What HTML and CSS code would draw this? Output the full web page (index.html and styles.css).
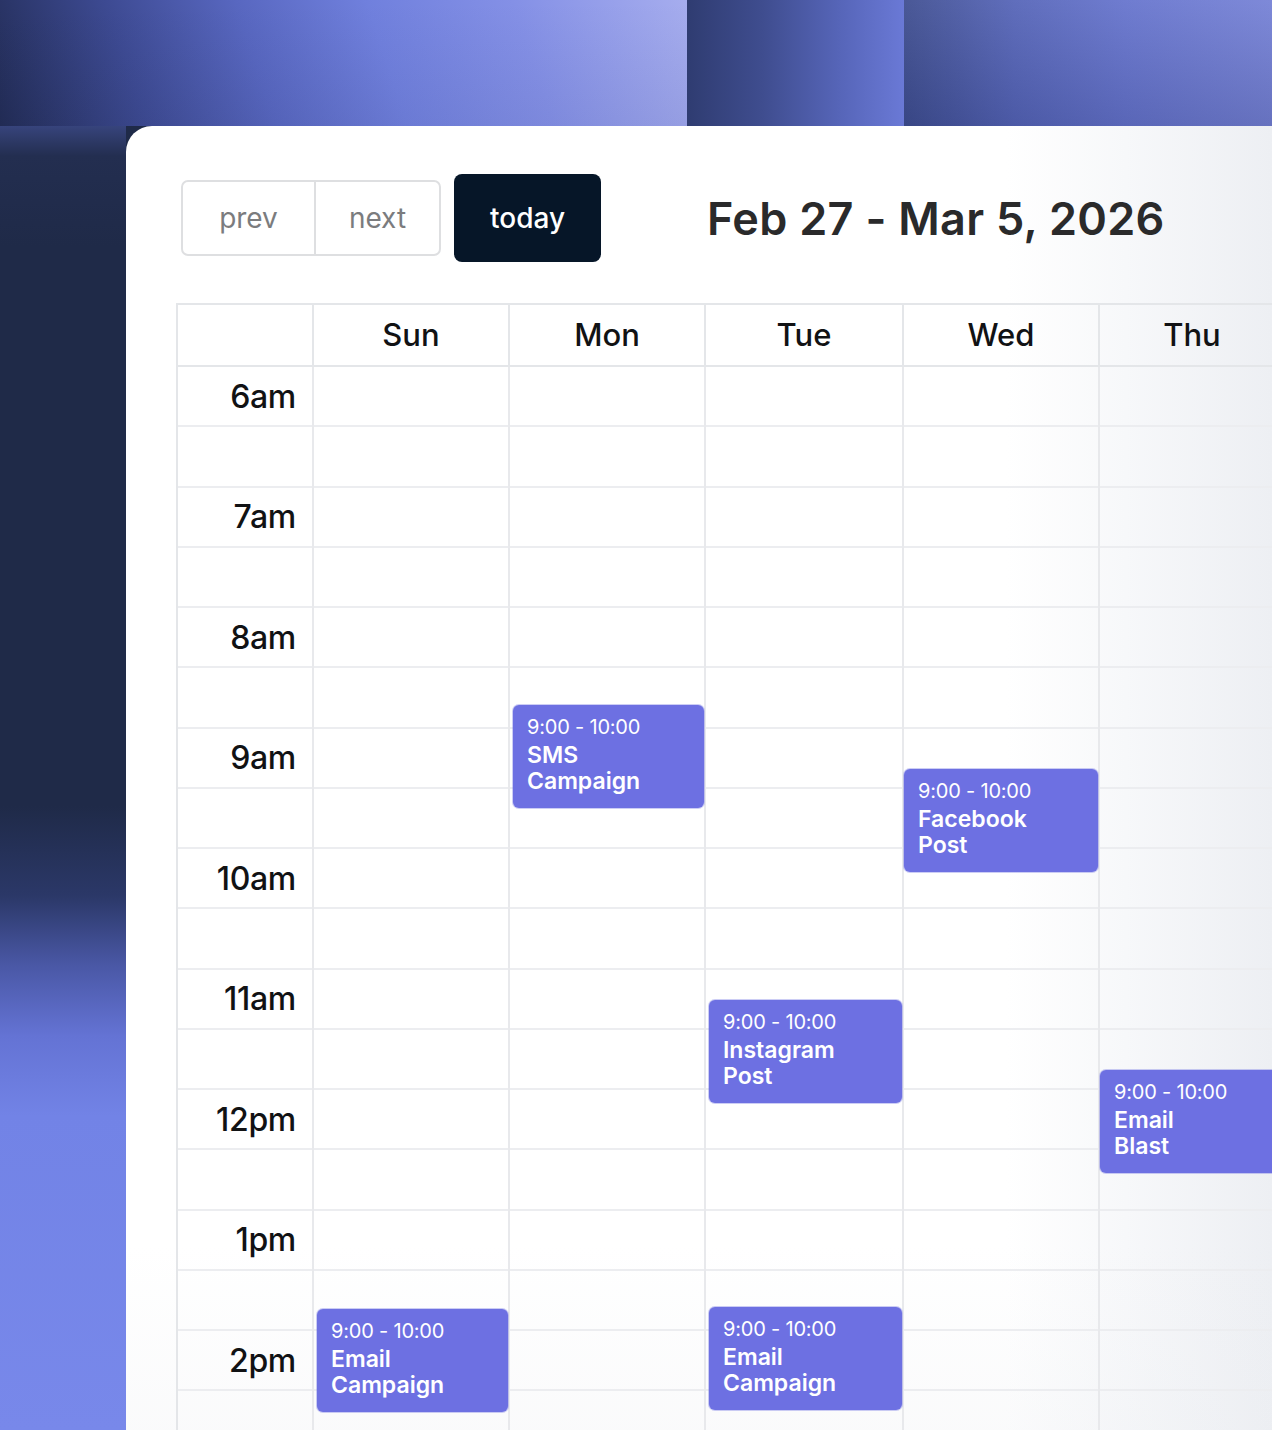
FILE: index.html
```html
<!DOCTYPE html>
<html lang="en">
<head>
<meta charset="utf-8">
<title>Calendar</title>
<link rel="stylesheet" href="styles.css">
</head>
<body>
<div class="page">
  <div class="top-band">
    <div class="band band-a"></div>
    <div class="band band-b"></div>
    <div class="band band-c"></div>
  </div>
  <div class="stage">
    <div class="strip"></div>
    <main class="card">
      <div class="toolbar">
        <div class="btn-group">
          <button class="btn btn-prev">prev</button>
          <button class="btn btn-next">next</button>
        </div>
        <button class="btn-today">today</button>
        <h1 class="title">Feb 27 - Mar 5, 2026</h1>
      </div>

      <div class="calendar">
        <div class="head">
          <div class="head-cell corner"></div>
          <div class="head-cell">Sun</div>
          <div class="head-cell">Mon</div>
          <div class="head-cell">Tue</div>
          <div class="head-cell">Wed</div>
          <div class="head-cell">Thu</div>
        </div>

        <div class="body">
          <div class="times">
            <div class="slot label">6am</div><div class="slot"></div>
            <div class="slot label">7am</div><div class="slot"></div>
            <div class="slot label">8am</div><div class="slot"></div>
            <div class="slot label">9am</div><div class="slot"></div>
            <div class="slot label">10am</div><div class="slot"></div>
            <div class="slot label">11am</div><div class="slot"></div>
            <div class="slot label">12pm</div><div class="slot"></div>
            <div class="slot label">1pm</div><div class="slot"></div>
            <div class="slot label">2pm</div><div class="slot"></div>
          </div>

          <div class="day">
            <div class="slot"></div><div class="slot"></div><div class="slot"></div><div class="slot"></div><div class="slot"></div><div class="slot"></div>
            <div class="slot"></div><div class="slot"></div><div class="slot"></div><div class="slot"></div><div class="slot"></div><div class="slot"></div>
            <div class="slot"></div><div class="slot"></div><div class="slot"></div><div class="slot"></div><div class="slot"></div><div class="slot"></div>
            <div class="event ev-left" style="top:942px"><div class="ev-time">9:00 - 10:00</div><div class="ev-title"><span>Email</span><span>Campaign</span></div></div>
          </div>

          <div class="day">
            <div class="slot"></div><div class="slot"></div><div class="slot"></div><div class="slot"></div><div class="slot"></div><div class="slot"></div>
            <div class="slot"></div><div class="slot"></div><div class="slot"></div><div class="slot"></div><div class="slot"></div><div class="slot"></div>
            <div class="slot"></div><div class="slot"></div><div class="slot"></div><div class="slot"></div><div class="slot"></div><div class="slot"></div>
            <div class="event ev-left" style="top:338px"><div class="ev-time">9:00 - 10:00</div><div class="ev-title"><span>SMS</span><span>Campaign</span></div></div>
          </div>

          <div class="day">
            <div class="slot"></div><div class="slot"></div><div class="slot"></div><div class="slot"></div><div class="slot"></div><div class="slot"></div>
            <div class="slot"></div><div class="slot"></div><div class="slot"></div><div class="slot"></div><div class="slot"></div><div class="slot"></div>
            <div class="slot"></div><div class="slot"></div><div class="slot"></div><div class="slot"></div><div class="slot"></div><div class="slot"></div>
            <div class="event ev-left" style="top:633px"><div class="ev-time">9:00 - 10:00</div><div class="ev-title"><span>Instagram</span><span>Post</span></div></div>
            <div class="event ev-left" style="top:940px"><div class="ev-time">9:00 - 10:00</div><div class="ev-title"><span>Email</span><span>Campaign</span></div></div>
          </div>

          <div class="day">
            <div class="slot"></div><div class="slot"></div><div class="slot"></div><div class="slot"></div><div class="slot"></div><div class="slot"></div>
            <div class="slot"></div><div class="slot"></div><div class="slot"></div><div class="slot"></div><div class="slot"></div><div class="slot"></div>
            <div class="slot"></div><div class="slot"></div><div class="slot"></div><div class="slot"></div><div class="slot"></div><div class="slot"></div>
            <div class="event" style="top:402px"><div class="ev-time">9:00 - 10:00</div><div class="ev-title"><span>Facebook</span><span>Post</span></div></div>
          </div>

          <div class="day">
            <div class="slot"></div><div class="slot"></div><div class="slot"></div><div class="slot"></div><div class="slot"></div><div class="slot"></div>
            <div class="slot"></div><div class="slot"></div><div class="slot"></div><div class="slot"></div><div class="slot"></div><div class="slot"></div>
            <div class="slot"></div><div class="slot"></div><div class="slot"></div><div class="slot"></div><div class="slot"></div><div class="slot"></div>
            <div class="event" style="top:703px"><div class="ev-time">9:00 - 10:00</div><div class="ev-title"><span>Email</span><span>Blast</span></div></div>
          </div>
        </div>
      </div>
    </main>
  </div>
</div>
</body>
</html>
```

FILE: styles.css
```css
* { box-sizing: border-box; }

html, body {
  margin: 0;
  padding: 0;
}

body {
  width: 1272px;
  height: 1430px;
  overflow: hidden;
  font-family: "Inter", "Open Sans", "Liberation Sans", sans-serif;
  background: #1f2a48;
}

.page {
  width: 1272px;
  height: 1430px;
  overflow: hidden;
  display: flex;
  flex-direction: column;
}

/* ---------- backdrop ---------- */
.top-band {
  display: flex;
  height: 126px;
  flex: none;
}

.band { height: 100%; }

.band-a {
  width: 687px;
  background:
    linear-gradient(to bottom, rgba(20, 28, 70, 0) 0%, rgba(20, 28, 70, 0.06) 100%),
    linear-gradient(72deg, #222c55 0%, #3d4a92 20%, #5867c0 38%, #7080dd 56%, #8490e6 76%, #a6adee 100%);
}

.band-b {
  width: 217px;
  background: linear-gradient(to right, #2f3c71 0%, #3f4d8f 35%, #5665b8 70%, #6a79d6 100%);
}

.band-c {
  flex: 1;
  background:
    linear-gradient(to bottom, rgba(255, 255, 255, 0.06) 0%, rgba(20, 28, 70, 0.16) 100%),
    linear-gradient(to right, #3f4e90 0%, #5665b8 30%, #6674cd 60%, #7682d6 100%);
}

.stage {
  flex: 1;
  display: flex;
  min-height: 0;
}

.strip {
  width: 126px;
  flex: none;
  background: linear-gradient(to bottom,
    #37447c 0px,
    #232e50 30px,
    #1f2a48 120px,
    #1f2a48 680px,
    #2b3868 770px,
    #4a58a6 840px,
    #6473d4 910px,
    #7283e6 990px,
    #7888ea 1304px);
}

/* ---------- card ---------- */
.card {
  flex: none;
  width: 1180px;
  height: 1400px;
  overflow: hidden;
  border-top-left-radius: 26px;
  background:
    linear-gradient(to bottom, rgba(236, 238, 242, 0) 80%, rgba(234, 236, 240, 0.35) 100%),
    linear-gradient(to right, #ffffff 0px, #ffffff 880px, #f7f8fa 1000px, #edeff3 1146px);
  padding: 48px 0 0 50px;
}

.toolbar {
  display: flex;
  align-items: center;
  margin-left: 5px;
  height: 88px;
}

.btn-group {
  display: flex;
  height: 76px;
  border: 2px solid #dedfe1;
  border-radius: 7px;
  overflow: hidden;
  background: #fff;
}

.btn {
  border: 0;
  background: transparent;
  font-family: inherit;
  font-size: 28px;
  font-weight: 400;
  color: #7b7c7e;
  padding: 0;
  height: 100%;
  cursor: pointer;
}

.btn-prev {
  width: 133px;
  border-right: 2px solid #dedfe1;
}

.btn-next {
  width: 123px;
}

.btn-today {
  margin-left: 13px;
  width: 147px;
  height: 88px;
  border: 0;
  border-radius: 8px;
  background: #061628;
  color: #ffffff;
  font-family: inherit;
  font-size: 28px;
  font-weight: 500;
  padding: 0;
}

.title {
  margin: 0 0 0 106px;
  font-size: 45px;
  font-weight: 600;
  color: #2a2a2b;
  letter-spacing: 0.3px;
  white-space: nowrap;
}

/* ---------- calendar ---------- */
.calendar {
  margin-top: 41px;
  border-top: 2px solid #e4e6e9;
  border-left: 2px solid #e4e6e9;
  width: 1110px;
}

.head {
  display: grid;
  grid-template-columns: 136px 196px 196px 198px 196px 186px;
  height: 62px;
}

.head-cell {
  display: flex;
  align-items: center;
  justify-content: center;
  border-right: 2px solid #e4e6e9;
  border-bottom: 2px solid #e4e6e9;
  font-size: 31px;
  font-weight: 500;
  color: #111214;
  padding-bottom: 2px;
}

.body {
  display: grid;
  grid-template-columns: 136px 196px 196px 198px 196px 186px;
}

.times,
.day {
  display: flex;
  flex-direction: column;
  border-right: 2px solid #e8e9ec;
}

.day {
  position: relative;
}

.slot {
  height: 60.25px;
  flex: none;
  border-bottom: 2px solid #ecedf0;
}

.label {
  display: flex;
  align-items: center;
  justify-content: flex-end;
  padding-right: 16px;
  font-size: 32px;
  font-weight: 500;
  color: #111214;
  letter-spacing: -0.3px;
}

/* ---------- events ---------- */
.event {
  position: absolute;
  left: 0;
  right: 0;
  height: 103px;
  border-radius: 6px;
  background: #6d70e2;
  color: #ffffff;
  padding: 8px 14px 0;
  box-shadow: 0 0 0 1px rgba(109, 112, 226, 0.35);
}

.ev-left {
  left: 3px;
  right: 0;
}

.ev-time {
  font-size: 20px;
  font-weight: 400;
  line-height: 28px;
  letter-spacing: -0.2px;
}

.ev-title {
  font-size: 23px;
  font-weight: 600;
  line-height: 26px;
  margin-top: 1px;
}

.ev-title span {
  display: block;
}
```
